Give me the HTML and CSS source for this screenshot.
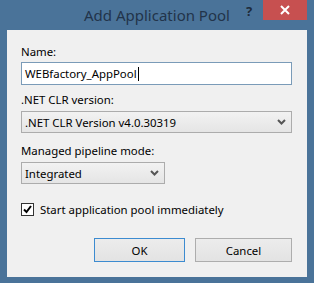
FILE: index.html
```html
<!DOCTYPE html>
<html lang="en">
<head>
    <meta charset="UTF-8">
    <title>Add Application Pool</title>
    <link rel="stylesheet" href="styles.css">
</head>
<body>
    <div class="window">
        <div class="titlebar">
            <span class="title">Add Application Pool</span>
            <span class="help">?</span>
            <span class="close">
                <svg width="10" height="10" viewBox="0 0 10 10"><path d="M1 1 L9 9 M9 1 L1 9" stroke="#fff" stroke-width="2"/></svg>
            </span>
        </div>
        <div class="client">
            <div class="label">Name:</div>
            <div class="textbox">WEBfactory_AppPool<span class="caret"></span></div>

            <div class="label spaced">.NET CLR version:</div>
            <div class="combo wide">
                <span>.NET CLR Version v4.0.30319</span>
                <svg class="chevron" width="9" height="6" viewBox="0 0 9 6"><path d="M1 1 L4.5 4.5 L8 1" fill="none" stroke="#555" stroke-width="2"/></svg>
            </div>

            <div class="label spaced-more">Managed pipeline mode:</div>
            <div class="combo narrow">
                <span>Integrated</span>
                <svg class="chevron" width="9" height="6" viewBox="0 0 9 6"><path d="M1 1 L4.5 4.5 L8 1" fill="none" stroke="#555" stroke-width="2"/></svg>
            </div>

            <label class="check-row">
                <span class="checkbox">
                    <svg width="11" height="11" viewBox="0 0 11 11"><path d="M2 5.5 L4.5 8 L9 2" fill="none" stroke="#000" stroke-width="2"/></svg>
                </span>
                Start application pool immediately
            </label>

            <div class="buttons">
                <button class="btn default">OK</button>
                <button class="btn cancel">Cancel</button>
            </div>
        </div>
    </div>
</body>
</html>
```

FILE: styles.css
```css
body {
    margin: 0;
    background-color: #4a7399;
    font-family: 'Noto Sans', 'Open Sans', sans-serif;
    font-size: 11.4px;
    color: #000;
}

.window {
    width: 314px;
    height: 283px;
    display: flex;
    flex-direction: column;
}

/* Title bar */
.titlebar {
    height: 30px;
    position: relative;
    display: flex;
    justify-content: center;
}

.title {
    margin-top: 5px;
    font-size: 15px;
    color: #22344a;
}

.help {
    position: absolute;
    left: 246px;
    top: 2px;
    font-size: 13px;
    font-weight: bold;
    color: #1e2b3a;
}

.close {
    position: absolute;
    right: 7px;
    top: 0;
    width: 44px;
    height: 20px;
    background-color: #c75050;
    display: flex;
    justify-content: center;
    align-items: center;
}

/* Client area */
.client {
    flex: 1;
    margin: 0 7px 6px 7px;
    background-color: #f0f0f0;
    padding: 14px 15px 0 14px;
}

.label {
    line-height: 16px;
    margin-bottom: 2px;
}

.label.spaced {
    margin-top: 7px;
    margin-bottom: 3px;
}

.label.spaced-more {
    margin-top: 10px;
    margin-bottom: 3px;
}

.textbox {
    height: 23px;
    box-sizing: border-box;
    border: 1px solid #7a9bb8;
    background-color: #fff;
    padding: 0 3px;
    line-height: 21px;
    display: flex;
    align-items: center;
}

.caret {
    display: inline-block;
    width: 1px;
    height: 14px;
    background-color: #000;
    margin-left: 1px;
}

.combo {
    height: 22px;
    box-sizing: border-box;
    border: 1px solid #acacac;
    background: linear-gradient(#f2f2f2, #e5e5e5);
    padding: 0 5px 0 3px;
    display: flex;
    justify-content: space-between;
    align-items: center;
}

.combo.narrow {
    width: 144px;
}

.check-row {
    margin-top: 19px;
    display: flex;
    align-items: center;
    gap: 6px;
    height: 13px;
}

.checkbox {
    width: 13px;
    height: 13px;
    box-sizing: border-box;
    border: 1px solid #333;
    background-color: #fff;
    display: flex;
    justify-content: center;
    align-items: center;
}

.buttons {
    margin-top: 22px;
    display: flex;
    justify-content: flex-end;
    gap: 10px;
}

.btn {
    height: 24px;
    font-family: 'Noto Sans', 'Open Sans', sans-serif;
    font-size: 11.4px;
    color: #000;
    background: linear-gradient(#ececec, #e3e3e3);
    border: 1px solid #adadad;
    padding: 0;
}

.btn.default {
    width: 91px;
    border-color: #3c8bd0;
}

.btn.cancel {
    width: 97px;
}
```
